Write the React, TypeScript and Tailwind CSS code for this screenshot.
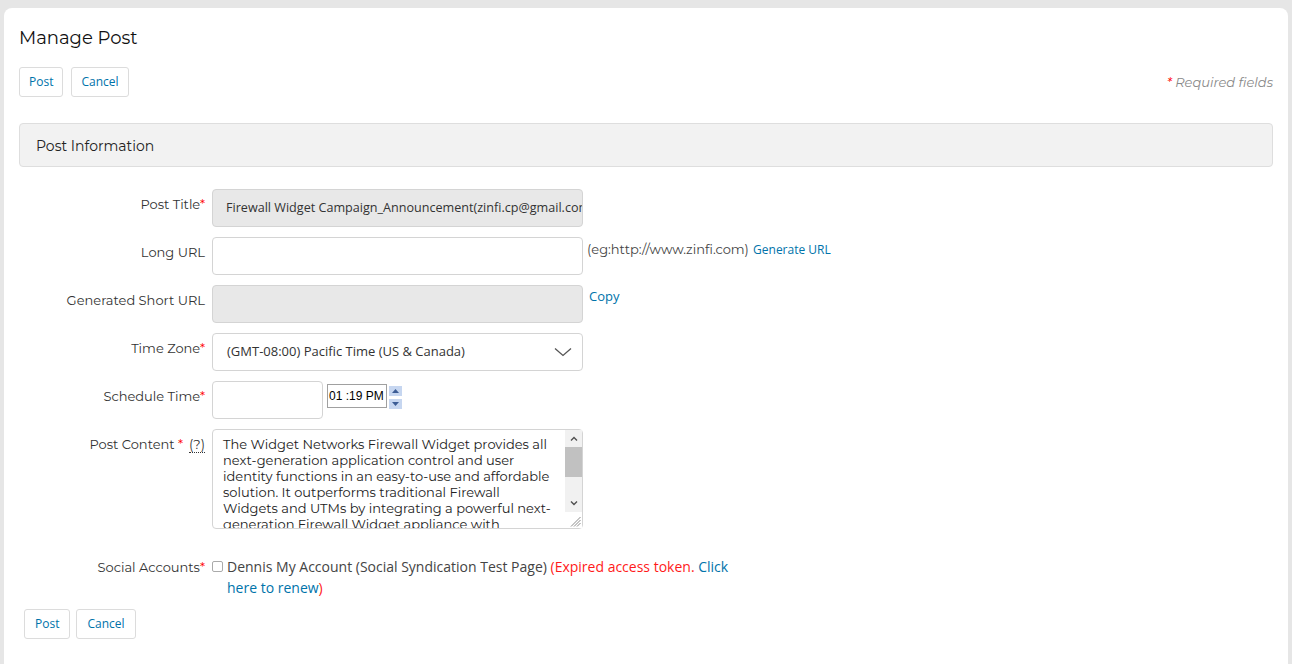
import React from 'react';

const LABEL = "font-['Montserrat','Inter',sans-serif]";
const BODY = "font-['Open_Sans',sans-serif]";

function Req() {
  return <span className="text-[#ff0000]">*</span>;
}

function Btn({ children, className = '' }: { children: React.ReactNode; className?: string }) {
  return (
    <button
      className={`h-[30px] rounded-[3px] border border-[#dcdcdc] bg-white text-[12px] text-[#0073aa] ${BODY} ${className}`}
    >
      {children}
    </button>
  );
}

function Row({
  label,
  children,
  className = 'mb-[10px]',
  labelPad = 'pt-[5px]',
}: {
  label: React.ReactNode;
  children: React.ReactNode;
  className?: string;
  labelPad?: string;
}) {
  return (
    <div className={`flex ${className}`}>
      <div className={`w-[193px] shrink-0 pr-[7px] ${labelPad} text-right text-[13px] leading-5 text-[#333] ${LABEL}`}>
        {label}
      </div>
      {children}
    </div>
  );
}

// classic scrollbar + resize grip drawn over the textarea's right edge
function FakeScrollbar() {
  return (
    <div className="pointer-events-none absolute right-[1px] top-[1px] bottom-[1px] flex w-[17px] flex-col bg-[#f1f1f1]">
      <div className="flex h-[17px] items-center justify-center">
        <svg width="8" height="5" viewBox="0 0 8 5" fill="none" stroke="#505050" strokeWidth="1.4">
          <path d="M1 4.5L4 1.5l3 3" />
        </svg>
      </div>
      <div className="h-[30px] bg-[#c1c1c1]" />
      <div className="flex-1" />
      <div className="flex h-[17px] items-center justify-center">
        <svg width="8" height="5" viewBox="0 0 8 5" fill="none" stroke="#505050" strokeWidth="1.4">
          <path d="M1 0.5L4 3.5l3-3" />
        </svg>
      </div>
      <div className="flex h-[16px] items-end justify-end bg-white pb-[1px] pr-[1px]">
        <svg width="11" height="11" viewBox="0 0 11 11" stroke="#8a8a8a" strokeWidth="1">
          <path d="M10.5 1L1 10.5M10.5 4L4 10.5M10.5 7L7 10.5" />
        </svg>
      </div>
    </div>
  );
}

const CONTENT =
  'The Widget Networks Firewall Widget provides all next-generation application control and user identity functions in an easy-to-use and affordable solution. It outperforms traditional Firewall Widgets and UTMs by integrating a powerful next-generation Firewall Widget appliance with comprehensive security services.';

export default function App() {
  return (
    <div className="min-h-screen bg-[#e6e6e6] pt-2 px-1">
      <div className="min-h-[656px] rounded-t-lg bg-white px-[15px] pt-[18px]">
        <h1 className={`text-[18px] leading-6 text-[#111] ${LABEL}`}>Manage Post</h1>

        {/* top actions */}
        <div className="mt-[17px] flex items-center">
          <Btn className="px-[9px]">Post</Btn>
          <Btn className="ml-2 px-[9px]">Cancel</Btn>
          <div className={`ml-auto mt-[2px] text-[13px] italic text-[#888] ${LABEL}`}>
            <span className="text-[#ff0000]">*</span> Required fields
          </div>
        </div>

        <div className="mt-[26px] flex h-[44px] items-center rounded border border-[#dedede] bg-[#f2f2f2] px-4 pt-[2px]">
          <span className={`text-[14px] text-[#222] ${LABEL}`}>Post Information</span>
        </div>

        <div className="mt-[22px]">
          <Row label={<>Post Title<Req /></>}>
            <div className={`flex h-[38px] w-[371px] items-center overflow-hidden whitespace-nowrap rounded border border-[#d4d4d4] bg-[#e8e8e8] px-[13px] text-[12.6px] text-[#333] ${BODY}`}>
              Firewall Widget Campaign_Announcement(zinfi.cp@gmail.com)
            </div>
          </Row>

          <Row label="Long URL">
            <div className="h-[38px] w-[371px] rounded border border-[#d4d4d4] bg-white" />
            <div className="ml-1 pt-[2px] leading-[18px]">
              <span className={`text-[13px] text-[#444] ${LABEL}`}>(eg:http://www.zinfi.com)</span>{' '}
              <span className={`text-[12px] text-[#0073aa] ${BODY}`}>Generate URL</span>
            </div>
          </Row>

          <Row label="Generated Short URL">
            <div className="h-[38px] w-[371px] rounded border border-[#d4d4d4] bg-[#e8e8e8]" />
            <div className={`ml-[6px] pt-[2px] text-[13px] leading-[18px] text-[#0073aa] ${BODY}`}>Copy</div>
          </Row>

          <Row label={<>Time Zone<Req /></>}>
            <div className={`flex h-[38px] w-[371px] items-center justify-between rounded border border-[#d4d4d4] bg-white pl-[14px] pr-[10px] text-[13px] text-[#333] ${BODY}`}>
              <span>(GMT-08:00) Pacific Time (US &amp; Canada)</span>
              <svg width="18" height="10" viewBox="0 0 18 10" fill="none" stroke="#555" strokeWidth="1.3">
                <path d="M1 1.5l8 7 8-7" />
              </svg>
            </div>
          </Row>

          <Row label={<>Schedule Time<Req /></>}>
            <div className="h-[38px] w-[111px] rounded border border-[#d4d4d4] bg-white" />
            <div className="ml-1 mt-[3px] flex h-[24px] w-[60px] items-center border border-[#a0a0a0] bg-white pl-[1px] font-['Liberation_Sans',sans-serif] text-[12px] text-black">
              01 :19 PM
            </div>
            <div className="ml-[2px] mt-[5px] flex flex-col gap-[3px]">
              <div className="flex h-[10px] w-[13px] items-center justify-center bg-[#c6d6f0]">
                <svg width="7" height="4" viewBox="0 0 7 4"><path d="M0 4L3.5 0 7 4z" fill="#3b5c95" /></svg>
              </div>
              <div className="flex h-[10px] w-[13px] items-center justify-center bg-[#c6d6f0]">
                <svg width="7" height="4" viewBox="0 0 7 4"><path d="M0 0L3.5 4 7 0z" fill="#3b5c95" /></svg>
              </div>
            </div>
          </Row>

          <Row
            className="mb-[28px]"
            label={
              <>
                Post Content <Req />
                <span className="ml-[6px] border-b border-dotted border-[#333] leading-[13px]">(?)</span>
              </>
            }
          >
            <div className="relative h-[100px] w-[371px]">
              <textarea
                readOnly
                defaultValue={CONTENT}
                className={`h-full w-full resize-none overflow-hidden rounded border border-[#d4d4d4] bg-white py-[6px] pl-[10px] pr-[26px] text-[13px] leading-4 text-[#222] outline-none ${LABEL}`}
              />
              <FakeScrollbar />
            </div>
          </Row>

          <Row className="mb-[11px]" labelPad="pt-0" label={<>Social Accounts<Req /></>}>
            <div className={`-mt-[1px] flex w-[528px] text-[14px] leading-[21px] text-[#444] ${BODY}`}>
              <span className="mr-[4px] mt-[5px] h-[11px] w-[11px] shrink-0 rounded-[2px] border border-[#aaa] bg-white" />
              <p>
                Dennis My Account (Social Syndication Test Page){' '}
                <span className="text-[#ff1a1a]">
                  (Expired access token. <span className="text-[#0073aa]">Click here to renew</span>)
                </span>
              </p>
            </div>
          </Row>
        </div>

        {/* bottom actions */}
        <div className="ml-[5px] flex pb-6">
          <Btn className="px-[10px]">Post</Btn>
          <Btn className="ml-[6px] px-[10px]">Cancel</Btn>
        </div>
      </div>
    </div>
  );
}
